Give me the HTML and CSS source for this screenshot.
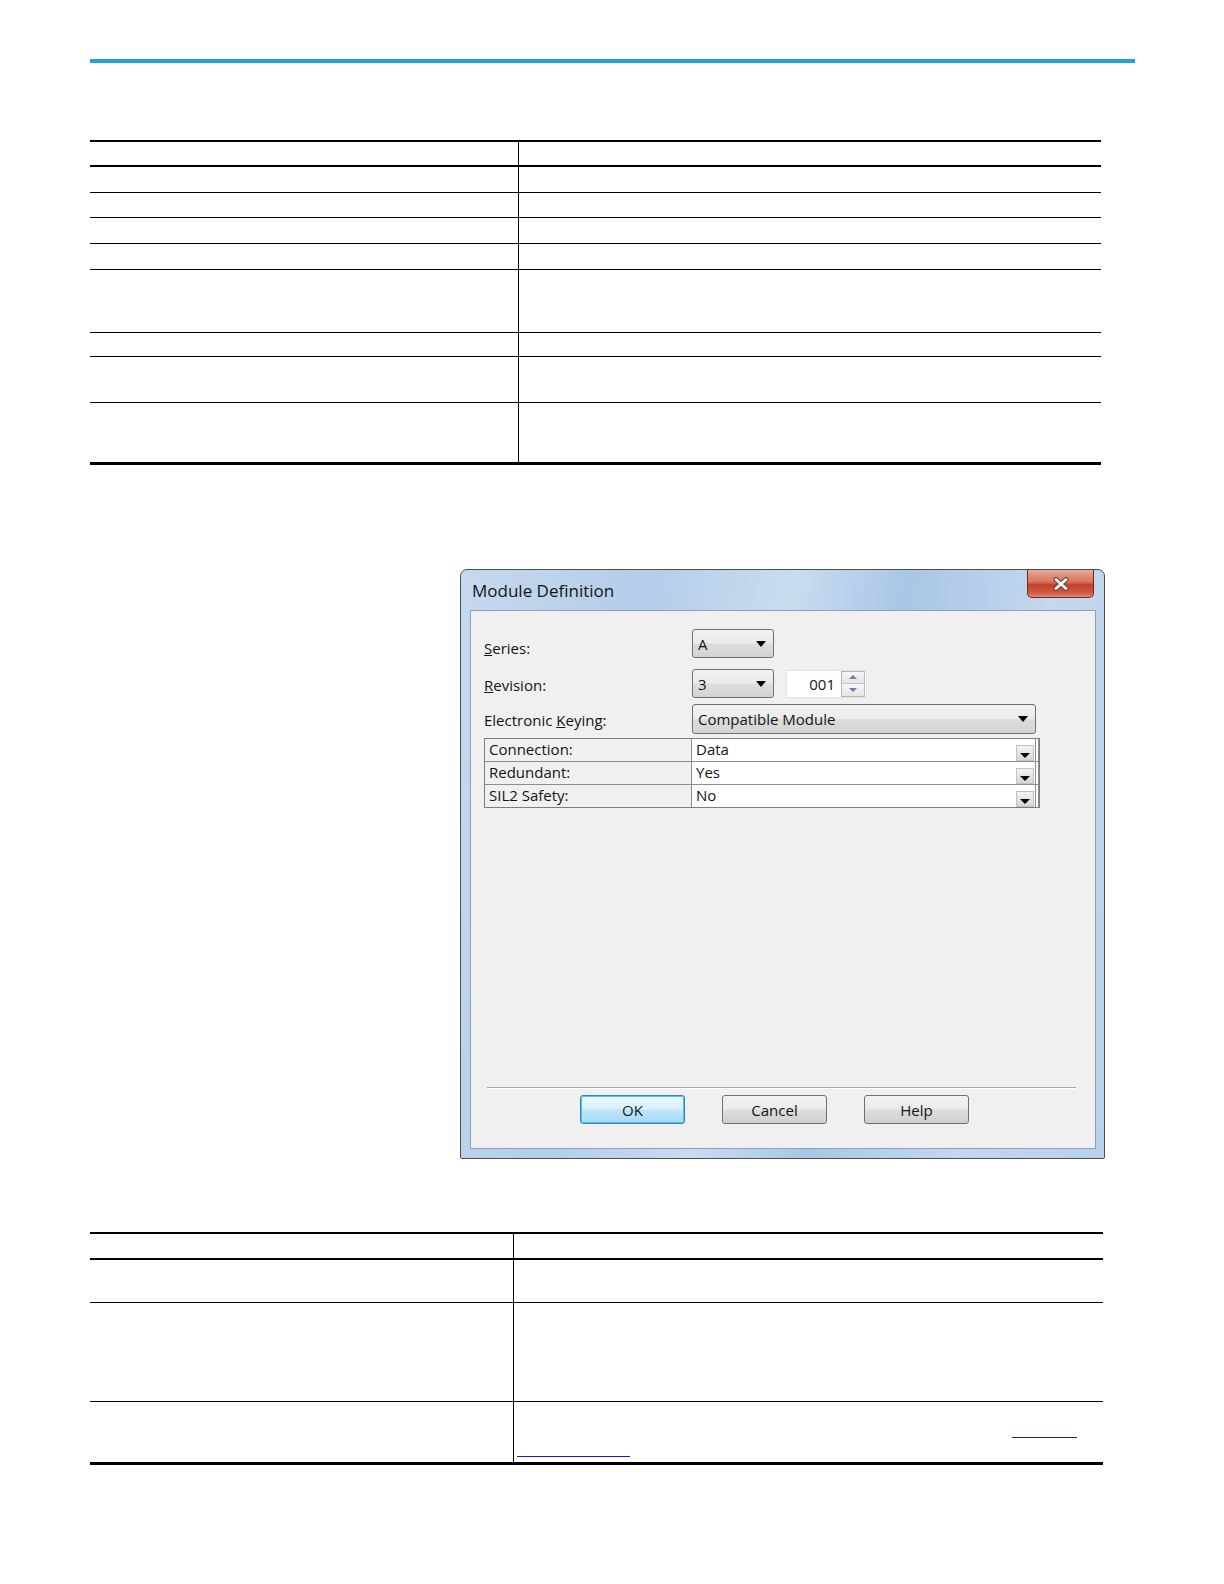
FILE: index.html
```html
<!DOCTYPE html>
<html lang="en">
<head>
<meta charset="utf-8">
<title>Module Definition</title>
<link rel="stylesheet" href="styles.css">
</head>
<body>
<div class="page">
  <div class="topRule"></div>

  <!-- Upper table (lines only) -->
  <div class="specTable specTable1">
    <div class="specRow specHead h23"><div class="specCell"></div><div class="specCell"></div></div>
    <div class="specRow h25"><div class="specCell"></div><div class="specCell"></div></div>
    <div class="specRow h24"><div class="specCell"></div><div class="specCell"></div></div>
    <div class="specRow h25"><div class="specCell"></div><div class="specCell"></div></div>
    <div class="specRow h25"><div class="specCell"></div><div class="specCell"></div></div>
    <div class="specRow h62"><div class="specCell"></div><div class="specCell"></div></div>
    <div class="specRow h23"><div class="specCell"></div><div class="specCell"></div></div>
    <div class="specRow h45"><div class="specCell"></div><div class="specCell"></div></div>
    <div class="specRow h59"><div class="specCell"></div><div class="specCell"></div></div>
  </div>

  <!-- Module Definition dialog -->
  <div class="dlg">
    <div class="dlgTitle">
      <span class="dlgCaption">Module Definition</span>
      <div class="dlgClose">
        <svg width="20" height="14" viewBox="0 0 20 14">
          <path d="M5 2.5 L15 11.5 M15 2.5 L5 11.5" stroke="#6a3a32" stroke-width="5" stroke-linecap="round"/>
          <path d="M5 2.5 L15 11.5 M15 2.5 L5 11.5" stroke="#f4f4f4" stroke-width="3" stroke-linecap="round"/>
        </svg>
      </div>
    </div>
    <div class="dlgClient">
      <div class="formRow rowSeries">
        <label class="formLabel labelLow"><u>S</u>eries:</label>
        <div class="combo comboSmall"><span>A</span><i class="comboArrow"></i></div>
      </div>
      <div class="formRow rowRevision">
        <label class="formLabel"><u>R</u>evision:</label>
        <div class="combo comboSmall"><span>3</span><i class="comboArrow"></i></div>
        <div class="spinBox">
          <span class="spinValue">001</span>
          <div class="spinBtns">
            <div class="spinBtn"><i class="spinUp"></i></div>
            <div class="spinBtn"><i class="spinDown"></i></div>
          </div>
        </div>
      </div>
      <div class="formRow rowKeying">
        <label class="formLabel">Electronic <u>K</u>eying:</label>
        <div class="combo comboWide"><span>Compatible Module</span><i class="comboArrow"></i></div>
      </div>

      <div class="propGrid">
        <div class="propRow">
          <div class="propName">Connection:</div>
          <div class="propValue"><span>Data</span><div class="dropBtn"><i></i></div></div>
        </div>
        <div class="propRow">
          <div class="propName">Redundant:</div>
          <div class="propValue"><span>Yes</span><div class="dropBtn"><i></i></div></div>
        </div>
        <div class="propRow">
          <div class="propName">SIL2 Safety:</div>
          <div class="propValue"><span>No</span><div class="dropBtn"><i></i></div></div>
        </div>
      </div>

      <div class="dlgFooter">
        <div class="separator"></div>
        <div class="btnRow">
          <div class="btn btnDefault">OK</div>
          <div class="btn">Cancel</div>
          <div class="btn">Help</div>
        </div>
      </div>
    </div>
  </div>

  <!-- Lower table (lines only) -->
  <div class="specTable specTable2">
    <div class="specRow specHead h24"><div class="specCell"></div><div class="specCell"></div></div>
    <div class="specRow h42"><div class="specCell"></div><div class="specCell"></div></div>
    <div class="specRow h98"><div class="specCell"></div><div class="specCell"></div></div>
    <div class="specRow h60">
      <div class="specCell"></div>
      <div class="specCell linkCell">
        <a class="xref xrefA" href="#"></a>
        <a class="xref xrefB" href="#"></a>
      </div>
    </div>
  </div>
</div>
</body>
</html>
```

FILE: styles.css
```css
  body {
    margin: 0;
    background-color: #ffffff;
    font-family: "Liberation Sans", Arial, sans-serif;
  }
  .page {
    padding: 59px 0 0 90px;
  }
  .topRule {
    width: 1045px;
    height: 4px;
    background-color: #1ea3dc;
  }

  /* tables */
  .specTable {
    border-top: 2px solid #000;
    border-bottom: 3px solid #000;
  }
  .specTable1 {
    width: 1011px;
    margin-top: 77px;
  }
  .specTable2 {
    width: 1013px;
    margin-top: 73px;
  }
  .specRow {
    display: grid;
    border-bottom: 1px solid #000;
  }
  .specTable1 .specRow {
    grid-template-columns: 428px 1fr;
  }
  .specTable2 .specRow {
    grid-template-columns: 423px 1fr;
  }
  .specRow:last-child {
    border-bottom: none;
  }
  .specHead {
    border-bottom: 2px solid #000;
  }
  .specCell + .specCell {
    border-left: 1.5px solid #000;
  }
  .h23 { height: 23px; }
  .h24 { height: 24px; }
  .h25 { height: 25px; }
  .h42 { height: 42px; }
  .h45 { height: 45px; }
  .h59 { height: 59px; }
  .h60 { height: 60px; }
  .h62 { height: 62px; }
  .h98 { height: 98px; }

  .linkCell {
    padding: 0 26px 0 3px;
  }
  .xref {
    display: block;
    border-bottom: 1px solid #1c1ca8;
  }
  .xrefA {
    width: 65px;
    height: 35px;
    margin-left: auto;
  }
  .xrefB {
    width: 113px;
    height: 18px;
  }

  /* dialog */
  .dlg {
    width: 643px;
    margin: 104px 0 0 370px;
    border: 1px solid #4a4f57;
    border-radius: 7px 7px 2px 2px;
    background: linear-gradient(100deg, #c6d9ee 0%, #b4cde8 25%, #c9dcf0 45%, #a9c6e6 60%, #c4d8ee 80%, #b9d1ea 100%);
    font-family: "Open Sans", "Noto Sans", sans-serif;
    color: #141414;
  }
  .dlgTitle {
    height: 40px;
    display: flex;
    justify-content: space-between;
    align-items: flex-start;
  }
  .dlgCaption {
    font-size: 17px;
    padding: 9px 0 0 11px;
  }
  .dlgClose {
    width: 65px;
    height: 27px;
    margin-right: 10px;
    border: 1px solid #6b2c22;
    border-top: none;
    border-radius: 0 0 5px 5px;
    background: linear-gradient(#eaa999 0%, #d8715c 45%, #c0402a 55%, #cf5c44 85%, #e08a70 100%);
    display: flex;
    align-items: center;
    justify-content: center;
  }
  .dlgClient {
    height: 537px;
    margin: 0 8px 9px 9px;
    border: 1px solid #8aa1bb;
    background-color: #f0f0f0;
    display: flex;
    flex-direction: column;
    font-size: 15px;
  }
  .formRow {
    display: flex;
    align-items: center;
    padding-left: 13px;
  }
  .rowSeries { margin-top: 18px; }
  .rowRevision { margin-top: 11px; }
  .rowKeying { margin-top: 6px; }
  .formLabel {
    width: 208px;
    padding-top: 2px;
  }
  .labelLow {
    padding-top: 9px;
  }
  .combo {
    box-sizing: border-box;
    border: 1px solid #707070;
    border-radius: 3px;
    background: linear-gradient(#f3f3f3 0%, #ebebeb 48%, #dddddd 52%, #d3d3d3 100%);
    display: flex;
    align-items: center;
    justify-content: space-between;
    padding: 0 7px 0 5px;
  }
  .comboSmall {
    width: 82px;
    height: 29px;
  }
  .comboWide {
    width: 344px;
    height: 30px;
  }
  .comboArrow {
    width: 0;
    height: 0;
    border-left: 5px solid transparent;
    border-right: 5px solid transparent;
    border-top: 6px solid #000;
  }
  .spinBox {
    box-sizing: border-box;
    width: 81px;
    height: 28px;
    margin-left: 12px;
    background-color: #fff;
    border: 1px solid #e2e2e2;
    display: flex;
    align-items: center;
    justify-content: flex-end;
  }
  .spinValue {
    padding-right: 6px;
  }
  .spinBtns {
    width: 22px;
    height: 24px;
    margin-right: 1px;
    display: flex;
    flex-direction: column;
    border: 1px solid #b7b7b7;
  }
  .spinBtn {
    flex: 1;
    display: flex;
    align-items: center;
    justify-content: center;
    background: linear-gradient(#f6f6f6, #e4e4e4);
  }
  .spinBtn + .spinBtn {
    border-top: 1px solid #c6c6c6;
  }
  .spinUp, .spinDown {
    width: 0;
    height: 0;
    border-left: 4px solid transparent;
    border-right: 4px solid transparent;
  }
  .spinUp { border-bottom: 4px solid #6c7fb4; }
  .spinDown { border-top: 4px solid #6c7fb4; }

  .propGrid {
    width: 554px;
    margin: 4px 0 0 13px;
    border: 1px solid #7d7d7d;
  }
  .propRow {
    display: grid;
    grid-template-columns: 207px 1fr;
    height: 22px;
    line-height: 20px;
    border-bottom: 1px solid #8e8e8e;
  }
  .propRow:last-child {
    border-bottom: none;
  }
  .propName {
    padding: 0 0 0 4px;
    border-right: 1px solid #8e8e8e;
  }
  .propValue {
    background-color: #fff;
    display: flex;
    justify-content: space-between;
    align-items: flex-end;
    padding-left: 4px;
    border-right: 4px double #8e8e8e;
  }
  .propValue span {
    align-self: flex-start;
  }
  .dropBtn {
    width: 18px;
    height: 16px;
    margin-right: 1px;
    background: linear-gradient(#f4f4f4, #d6d6d6);
    border: 1px solid #c2c2c2;
    display: flex;
    align-items: flex-end;
    justify-content: center;
    padding-bottom: 2px;
    box-sizing: border-box;
  }
  .dropBtn i {
    width: 0;
    height: 0;
    border-left: 5px solid transparent;
    border-right: 5px solid transparent;
    border-top: 5px solid #000;
  }

  .dlgFooter {
    margin-top: auto;
    padding-bottom: 24px;
  }
  .separator {
    margin: 0 19px 0 16px;
    border-top: 1px solid #a8a8a8;
    border-bottom: 1px solid #ffffff;
  }
  .btnRow {
    display: flex;
    gap: 37px;
    padding-left: 109px;
    margin-top: 6px;
  }
  .btn {
    box-sizing: border-box;
    width: 105px;
    height: 29px;
    border: 1px solid #707070;
    border-radius: 3px;
    background: linear-gradient(#f2f2f2 0%, #ebebeb 48%, #dddddd 52%, #cfcfcf 100%);
    display: flex;
    align-items: center;
    justify-content: center;
  }
  .btnDefault {
    border-color: #3c7fb1;
    box-shadow: inset 0 0 0 1px #48c7f4;
    background: linear-gradient(#eaf6fd 0%, #d9f0fc 48%, #bee6fd 52%, #a7d9f5 100%);
  }
```
